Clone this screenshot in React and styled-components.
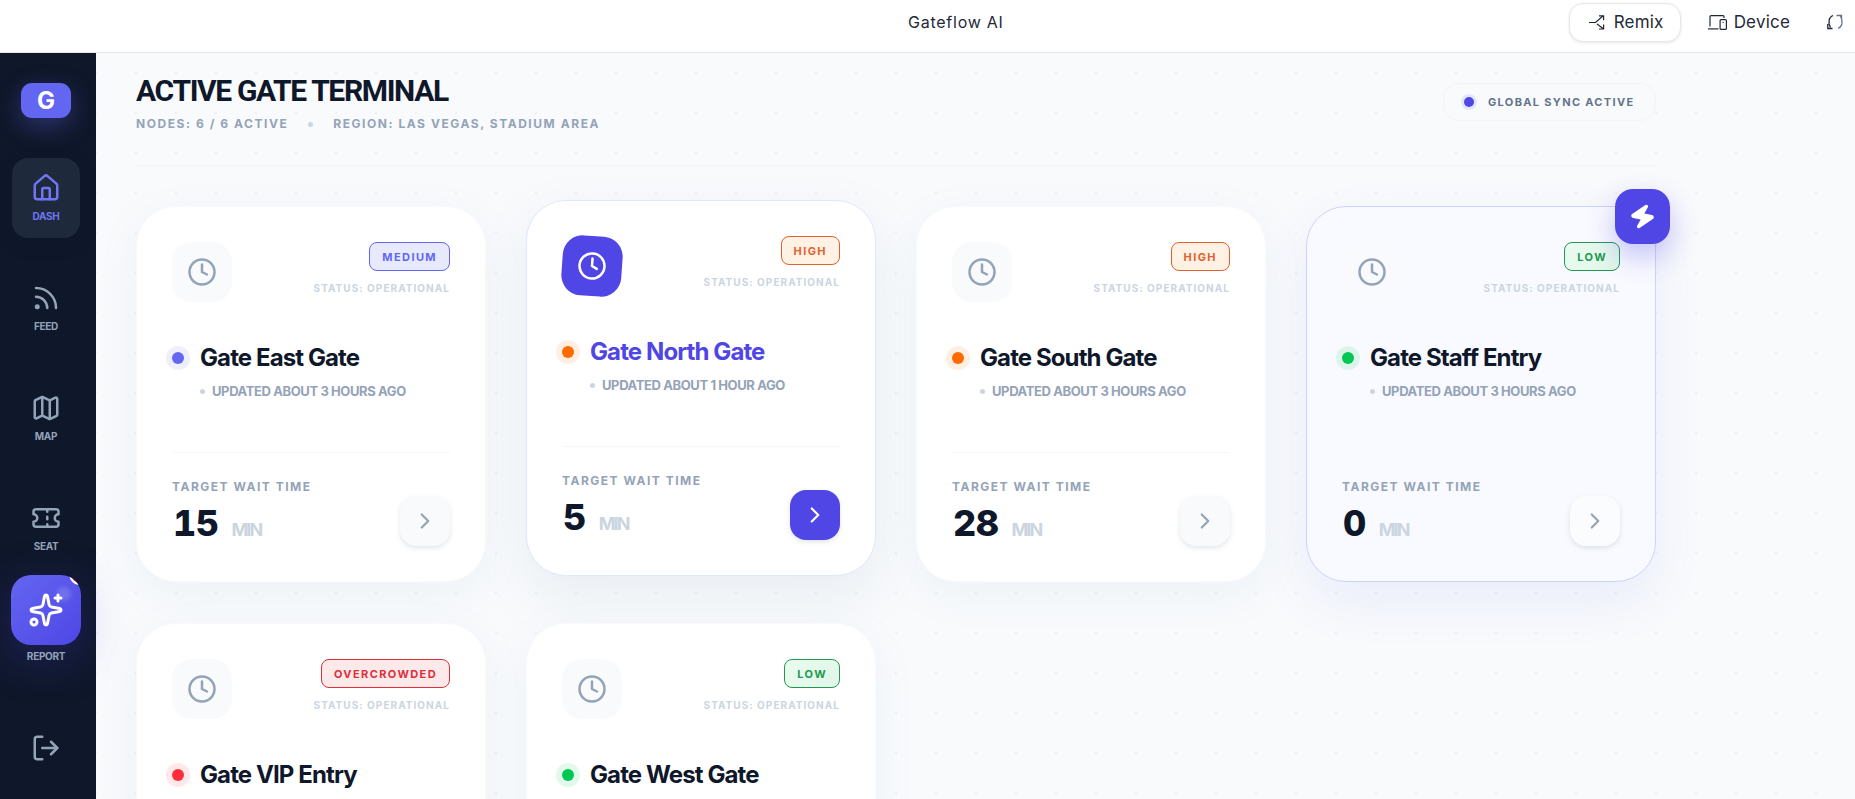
import React from 'react';
import styled, { createGlobalStyle, css } from 'styled-components';
import { House, Rss, Map as MapIcon, Ticket, Sparkles, LogOut, Clock, ChevronRight, Zap } from 'lucide-react';

const Global = createGlobalStyle`
  html, body { margin: 0; padding: 0; height: 100%; overflow: hidden; }
  body { font-family: Inter, "Liberation Sans", sans-serif; background: #fff; }
  #root { height: 100%; }
  * { box-sizing: border-box; }
`;

const Shell = styled.div`
  display: flex; flex-direction: column; height: 799px; overflow: hidden;
`;
const TopBar = styled.header`
  flex: 0 0 53px; display: flex; align-items: center; background: #fff;
  border-bottom: 1px solid #e5e7eb; padding: 0 11px 8px 0;
`;
const AppTitle = styled.div`
  margin-left: 908px; font-size: 16px; font-weight: 400; color: #1f2937; letter-spacing: 0.75px;
`;
const TopActions = styled.div`
  margin-left: auto; display: flex; align-items: center;
`;
const RemixButton = styled.button`
  width: 112px; height: 39px; display: flex; align-items: center; justify-content: center; gap: 8px;
  background: #fff; border: 1px solid #e5e7eb; border-radius: 14px; box-shadow: 0 1px 3px rgba(15,23,42,.1);
  font: 400 17px Inter, sans-serif; color: #1f2937; letter-spacing: 0.2px; padding: 0 0 0 3px;
`;
const DeviceButton = styled.div`
  display: flex; align-items: center; gap: 7px; margin-left: 27px;
  font: 400 17px Inter, sans-serif; color: #1f2937; letter-spacing: 0.2px;
`;
const RefreshWrap = styled.div`
  display: flex; margin-left: 37px;
`;
const Body = styled.div`
  flex: 1; display: flex; min-height: 0;
`;
const Side = styled.aside`
  flex: 0 0 96px; background: #0f172a; display: flex; flex-direction: column; align-items: center;
  padding: 30px 4px 36px 0; position: relative; z-index: 2;
`;
const Logo = styled.div`
  width: 50px; height: 35px; border-radius: 11px; background: #6366f1; color: #fff;
  font-size: 24px; font-weight: 700; display: flex; align-items: center; justify-content: center;
  box-shadow: 0 8px 24px rgba(99,102,241,.35); margin-bottom: 40px;
`;
const NavList = styled.nav`
  display: flex; flex-direction: column; align-items: center; gap: 30px;
`;
const NavItem = styled.div`
  width: 68px; height: 80px; border-radius: 16px; padding-top: 15px;
  display: flex; flex-direction: column; align-items: center; gap: 7px;
  color: ${p => (p.$active ? '#6f76f5' : '#94a3b8')};
  background: ${p => (p.$active ? '#1e293b' : 'transparent')};
  ${p => p.$active && 'box-shadow: 0 6px 16px rgba(15,23,42,.3);'}
`;
const NavLabel = styled.span`
  font-size: 10px; line-height: 12px; font-weight: 700; letter-spacing: -0.3px; text-transform: uppercase;
`;
const ReportItem = styled.div`
  margin-top: -23px; display: flex; flex-direction: column; align-items: center; gap: 5px; color: #94a3b8;
`;
const ReportTile = styled.div`
  width: 70px; height: 70px; border-radius: 20px; position: relative; overflow: hidden;
  background: linear-gradient(135deg, #6366f1, #4f46e5); color: #fff;
  display: flex; align-items: center; justify-content: center;
`;
const ReportShadow = styled.div`
  border-radius: 20px; box-shadow: 0 12px 48px rgba(79,70,229,.28);
`;
const Ping = styled.span`
  position: absolute; top: -12px; right: -10px; width: 22px; height: 22px; border-radius: 50%;
  background: #ef233c; border: 2px solid #fff;
`;
const Gloss = styled.span`
  position: absolute; top: 12px; left: 46px; width: 14px; height: 14px; border-radius: 50%;
  background: rgba(255,255,255,.16); filter: blur(2px);
`;
const LogoutWrap = styled.div`
  margin-top: auto; display: flex; color: #94a3b8;
`;
const Main = styled.main`
  flex: 1; min-width: 0; overflow: hidden; padding: 20px 0 0 40px; background-color: #f8fafc;
  background-image: radial-gradient(circle, #edf0f5 1px, transparent 1.2px);
  background-size: 40px 40px; background-position: -20px 0;
`;
const Content = styled.div`
  width: 1520px;
`;
const PageHead = styled.div`
  display: flex; justify-content: space-between; align-items: flex-start;
  border-bottom: 1px solid #f1f5f9; height: 93px; margin-bottom: 40px;
`;
const PageTitle = styled.h1`
  margin: 0; font-family: Roboto, "Liberation Sans", sans-serif; font-size: 30px; line-height: 36px; font-weight: 700; color: #0f172a; letter-spacing: -1.35px;
`;
const MetaRow = styled.div`
  display: flex; align-items: center; gap: 20px; margin-top: 7px;
  font-size: 12px; line-height: 16px; font-weight: 700; letter-spacing: 1.55px; color: #94a3b8; text-transform: uppercase;
`;
const MetaDot = styled.span`
  width: 5px; height: 5px; border-radius: 50%; background: #cbd5e1;
`;
const SyncPill = styled.div`
  margin-top: 10px; width: 213px; height: 38px; border-radius: 16px; border: 1px solid #f1f5f9; background: #f9fafc;
  display: flex; align-items: center; gap: 14px; padding-left: 20px;
  font-size: 11px; font-weight: 700; letter-spacing: 1.33px; color: #64748b; text-transform: uppercase;
`;
const SyncDot = styled.span`
  width: 10px; height: 10px; border-radius: 50%; background: #4f46e5; box-shadow: 0 0 0 3px #e0e7ff;
`;
const Grid = styled.div`
  display: grid; grid-template-columns: repeat(4, 350px); gap: 41px 40px;
`;
const variants = {
  default: css`background: #fff; border: 1px solid #f8fafc; box-shadow: 0 12px 40px rgba(148,163,184,.09);`,
  hover: css`background: #fff; border: 1px solid #e0e7ff; box-shadow: 0 20px 50px rgba(148,163,184,.14); transform: translateY(-6px);`,
  selected: css`background: #f9faff; border: 1px solid #cfd2fb; box-shadow: 0 20px 50px rgba(99,102,241,.09);`,
};
const Card = styled.article`
  position: relative; height: 376px; border-radius: 40px; padding: 35px; ${p => variants[p.$variant]}
`;
const FlashTile = styled.div`
  position: absolute; top: -18px; right: -15px; width: 55px; height: 55px; border-radius: 18px;
  background: #4f46e5; color: #fff; display: flex; align-items: center; justify-content: center;
  box-shadow: 0 12px 28px rgba(79,70,229,.32);
  svg { transform: rotate(12deg); }
`;
const CardTop = styled.div`
  display: flex; justify-content: space-between; align-items: flex-start; height: 60px;
`;
const IconTile = styled.div`
  width: 60px; height: 60px; border-radius: 20px; display: flex; align-items: center; justify-content: center;
  ${p => p.$hover
    ? css`background: #4f46e5; color: #fff; transform: rotate(4deg);`
    : css`background: ${p.$selected ? '#f9fafe' : '#f8fafc'}; color: #94a3b8;`}
`;
const StatusCol = styled.div`
  display: flex; flex-direction: column; align-items: flex-end; gap: 10px;
`;
const levels = {
  medium: css`color: #6366f1; background: #e7eafe; border-color: #6366f1;`,
  high: css`color: #e0612c; background: #fff1e3; border-color: #e0612c;`,
  low: css`color: #22994f; background: linear-gradient(135deg,#eafbf0,#e0f6e8); border-color: #22994f;`,
  crowded: css`color: #dc2f3a; background: #fee9ea; border-color: #dc2f3a;`,
};
const Badge = styled.span`
  height: 29px; display: inline-flex; align-items: center; padding: 0 12px; border: 1px solid; border-radius: 8px;
  font-size: 11px; font-weight: 700; letter-spacing: 1.4px; text-transform: uppercase; ${p => levels[p.$level]}
`;
const StatusText = styled.span`
  font-size: 10px; line-height: 14px; font-weight: 700; letter-spacing: 1.05px; color: #cbd5e1; text-transform: uppercase;
`;
const NameRow = styled.div`
  display: flex; align-items: center; gap: 10px; margin: 40px 0 0 -6px; height: 32px;
`;
const StateDot = styled.span`
  width: 12px; height: 12px; margin: 0 6px; border-radius: 50%; flex: none;
  background: ${p => p.$color}; box-shadow: 0 0 0 6px ${p => p.$color}1c;
`;
const GateName = styled.h2`
  margin: 0; font-size: 24px; line-height: 32px; font-weight: 700; letter-spacing: -0.9px;
  color: ${p => (p.$hover ? '#4f46e5' : '#0f172a')};
`;
const UpdatedRow = styled.div`
  display: flex; align-items: center; gap: 7px; margin: 9px 0 0 28px;
  font-size: 13px; line-height: 16px; font-weight: 700; letter-spacing: -0.4px; color: #94a3b8; text-transform: uppercase;
`;
const UpdatedDot = styled.span`
  width: 5px; height: 5px; border-radius: 50%; background: #cbd5e1;
`;
const CardFoot = styled.div`
  margin-top: 53px; padding-top: 26px; border-top: 1px solid ${p => (p.$selected ? 'transparent' : '#f5f7fa')};
  display: flex; justify-content: space-between; align-items: flex-end;
`;
const WaitCol = styled.div`
  padding-bottom: 2px;
`;
const WaitLabel = styled.div`
  font-size: 12px; line-height: 16px; font-weight: 700; letter-spacing: 1.5px; color: #94a3b8; text-transform: uppercase;
`;
const WaitValue = styled.div`
  margin-top: 8px; height: 41px; display: flex; align-items: baseline; gap: 13px;
`;
const WaitNumber = styled.span`
  font-size: 36px; line-height: 40px; font-weight: 800; font-variant-numeric: tabular-nums; color: #0f172a; letter-spacing: -0.5px; margin-left: 1px;
`;
const WaitUnit = styled.span`
  font-size: 18px; font-weight: 700; color: #cbd5e1; letter-spacing: -1.9px;
`;
const GoButton = styled.div`
  width: 50px; height: 50px; border-radius: 16px; display: flex; align-items: center; justify-content: center;
  box-shadow: 0 2px 5px rgba(148,163,184,.28);
  background: ${p => (p.$hover ? '#4f46e5' : p.$selected ? '#fbfcfe' : '#f8fafc')};
  color: ${p => (p.$hover ? '#fff' : '#94a3b8')};
`;

const RemixIcon = () => (
  <svg width="17" height="15" viewBox="0 0 17 15" fill="none" stroke="#1f2937" strokeWidth="1.2">
    <path d="M0 7.500H6.500L14 1M10 .8H14.600V5.200" />
    <path d="M8 9l6 4.500M14.600 9.500V14H10" />
  </svg>
);
const DeviceIcon = () => (
  <svg width="19" height="15" viewBox="0 0 19 15" fill="none" stroke="#1f2937" strokeWidth="1.2">
    <path d="M2 11.500V1.600C2 1 2.400.6 3 .6H15c.6 0 1 .4 1 1V3" />
    <path d="M0 13.900H10.500" />
    <rect x="12.100" y="4.600" width="6.300" height="9.800" rx="1" />
    <path d="M15.200 7v1" />
  </svg>
);
const RefreshIcon = () => (
  <svg width="17" height="16" viewBox="0 0 17 16" fill="none" stroke="#1f2937" strokeWidth="1.3">
    <path d="M6 1.500C2 3 .5 8 3.500 13.500M.8 10V14.500H5.500" />
    <path d="M11 14.500C15 13 16.500 8 13.500 2M9.500 1.500H14.500V5.500" stroke="#64748b" />
  </svg>
);

const gates = [
  { name: 'East Gate', level: 'medium', label: 'Medium', color: '#6366f1', ago: '3 hours', wait: 15 },
  { name: 'North Gate', level: 'high', label: 'High', color: '#ff6a00', ago: '1 hour', wait: 5, variant: 'hover' },
  { name: 'South Gate', level: 'high', label: 'High', color: '#ff6a00', ago: '3 hours', wait: 28 },
  { name: 'Staff Entry', level: 'low', label: 'Low', color: '#00c853', ago: '3 hours', wait: 0, variant: 'selected' },
  { name: 'VIP Entry', level: 'crowded', label: 'Overcrowded', color: '#ff2d3a', ago: '2 hours', wait: 42 },
  { name: 'West Gate', level: 'low', label: 'Low', color: '#00c853', ago: '3 hours', wait: 2 },
];
const nav = [
  { label: 'Dash', Icon: House, active: true },
  { label: 'Feed', Icon: Rss },
  { label: 'Map', Icon: MapIcon },
  { label: 'Seat', Icon: Ticket },
];

const GateCard = ({ gate }) => {
  const variant = gate.variant || 'default';
  const hover = variant === 'hover';
  const selected = variant === 'selected';
  return (
    <Card $variant={variant}>
      {selected && <FlashTile><Zap size={27} fill="#fff" strokeWidth={2} /></FlashTile>}
      <CardTop>
        <IconTile $hover={hover} $selected={selected}><Clock size={30} strokeWidth={2} /></IconTile>
        <StatusCol>
          <Badge $level={gate.level}>{gate.label}</Badge>
          <StatusText>Status: Operational</StatusText>
        </StatusCol>
      </CardTop>
      <NameRow>
        <StateDot $color={gate.color} />
        <GateName $hover={hover}>Gate {gate.name}</GateName>
      </NameRow>
      <UpdatedRow><UpdatedDot />Updated about {gate.ago} ago</UpdatedRow>
      <CardFoot $selected={selected}>
        <WaitCol>
          <WaitLabel>Target Wait Time</WaitLabel>
          <WaitValue><WaitNumber>{gate.wait}</WaitNumber><WaitUnit>MIN</WaitUnit></WaitValue>
        </WaitCol>
        <GoButton $hover={hover} $selected={selected}><ChevronRight size={26} strokeWidth={2} /></GoButton>
      </CardFoot>
    </Card>
  );
};

export default function App() {
  return (
    <Shell>
      <Global />
      <TopBar>
        <AppTitle>Gateflow AI</AppTitle>
        <TopActions>
          <RemixButton><RemixIcon />Remix</RemixButton>
          <DeviceButton><DeviceIcon />Device</DeviceButton>
          <RefreshWrap><RefreshIcon /></RefreshWrap>
        </TopActions>
      </TopBar>
      <Body>
        <Side>
          <Logo>G</Logo>
          <NavList>
            {nav.map(({ label, Icon, active }) => (
              <NavItem key={label} $active={active}>
                <Icon size={30} strokeWidth={2} />
                <NavLabel>{label}</NavLabel>
              </NavItem>
            ))}
            <ReportItem>
              <ReportShadow>
                <ReportTile>
                  <Gloss />
                  <Ping />
                  <Sparkles size={36} strokeWidth={2} />
                </ReportTile>
              </ReportShadow>
              <NavLabel>Report</NavLabel>
            </ReportItem>
          </NavList>
          <LogoutWrap><LogOut size={30} strokeWidth={2} /></LogoutWrap>
        </Side>
        <Main>
          <Content>
            <PageHead>
              <div>
                <PageTitle>ACTIVE GATE TERMINAL</PageTitle>
                <MetaRow>
                  <span>Nodes: 6 / 6 Active</span>
                  <MetaDot />
                  <span>Region: Las Vegas, Stadium Area</span>
                </MetaRow>
              </div>
              <SyncPill><SyncDot />Global Sync Active</SyncPill>
            </PageHead>
            <Grid>
              {gates.map(g => <GateCard key={g.name} gate={g} />)}
            </Grid>
          </Content>
        </Main>
      </Body>
    </Shell>
  );
}
